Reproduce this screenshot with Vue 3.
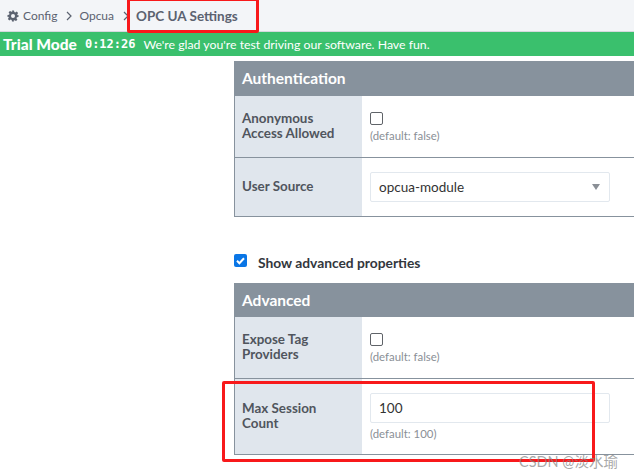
<script setup>
const crumbs = ['Config', 'Opcua']
</script>

<template>
  <div class="page">
    <div class="crumbs">
      <svg class="gear" width="12" height="12" viewBox="0 0 24 24">
        <path fill="#5b6270" fill-rule="evenodd" d="M10 1h4l.7 3.2 1.9.8 2.8-1.8 2.8 2.8-1.8 2.8.8 1.9L23 10v4l-3.2.7-.8 1.9 1.8 2.8-2.8 2.8-2.8-1.8-1.9.8L14 23h-4l-.7-3.2-1.9-.8-2.8 1.8-2.8-2.8 1.8-2.8-.8-1.9L1 14v-4l3.2-.7.8-1.9-1.8-2.8 2.8-2.8 2.8 1.8 1.9-.8zM12 8a4 4 0 1 0 0 8 4 4 0 0 0 0-8z"/>
      </svg>
      <template v-for="c in crumbs" :key="c">
        <span class="crumb">{{ c }}</span>
        <svg class="chev" width="6" height="10" viewBox="0 0 6 10"><path d="M1 1l4 4-4 4" fill="none" stroke="#5b6270" stroke-width="1.2"/></svg>
      </template>
      <span class="current">OPC UA Settings</span>
    </div>

    <div class="trial">
      <b>Trial Mode</b>
      <span class="clock">0:12:26</span>
      <span class="msg">We're glad you're test driving our software. Have fun.</span>
    </div>

    <div class="content">
      <section class="panel">
        <h3>Authentication</h3>
        <div class="row r-anon">
          <div class="label">Anonymous<br>Access Allowed</div>
          <div class="value">
            <span class="box"></span>
            <small>(default: false)</small>
          </div>
        </div>
        <div class="row r-user">
          <div class="label">User Source</div>
          <div class="value">
            <div class="field select">opcua-module<i class="caret"></i></div>
          </div>
        </div>
      </section>

      <label class="advanced">
        <span class="checked">
          <svg width="13" height="13" viewBox="0 0 13 13"><path d="M3 6.8l2.4 2.4L10 4.3" fill="none" stroke="#fff" stroke-width="2"/></svg>
        </span>
        Show advanced properties
      </label>

      <section class="panel">
        <h3 class="short">Advanced</h3>
        <div class="row r-anon">
          <div class="label">Expose Tag<br>Providers</div>
          <div class="value">
            <span class="box"></span>
            <small>(default: false)</small>
          </div>
        </div>
        <div class="row r-max">
          <div class="label">Max Session<br>Count</div>
          <div class="value">
            <div class="field">100</div>
            <small>(default: 100)</small>
          </div>
        </div>
      </section>
    </div>

    <div class="mark mark-title"></div>
    <div class="mark mark-max"></div>
    <div class="watermark">CSDN @淡水瑜</div>
  </div>
</template>

<style>
body { background: #fff; overflow: hidden; }
</style>

<style scoped>
.page {
  position: relative;
  width: 634px;
  height: 476px;
  overflow: hidden;
  font-family: Lato, "Noto Sans CJK SC", sans-serif;
  color: #4a4f58;
}

.crumbs {
  height: 32px;
  box-sizing: border-box;
  background: #f3f5f8;
  border-bottom: 1px solid #d5d9de;
  display: flex;
  align-items: center;
  padding-left: 7px;
  font-size: 12px;
  color: #5b6270;
}
.gear { margin-right: 4px; }
.crumb { margin-right: 9px; }
.chev { margin-right: 7px; }
.current {
  font-weight: 700;
  font-size: 13.5px;
}

.trial {
  height: 24px;
  background: #3ac06d;
  color: #fff;
  display: flex;
  align-items: center;
  padding-left: 3px;
}
.trial b { font-size: 15.5px; font-weight: 900; margin-right: 8px; }
.clock {
  font-family: "DejaVu Sans Mono", monospace;
  font-size: 12px;
  font-weight: 700;
  margin-right: 8px;
}
.msg { font-size: 12.3px; }

.content { padding: 5px 0 0 234px; }

.panel {
  width: 420px;
  border-left: 1px solid #87929d;
  border-bottom: 1px solid #87929d;
  box-sizing: border-box;
}
h3 {
  margin: 0 0 0 -1px;
  height: 35px;
  line-height: 35px;
  padding-left: 8px;
  background: #87929d;
  color: #fff;
  font-size: 15.5px;
}
h3.short { height: 34px; line-height: 34px; }

.row { display: flex; }
.row + .row { border-top: 1px solid #87929d; }
.r-anon { height: 61px; }
.r-user { height: 58px; }
.r-max { height: 75px; }

.label {
  width: 127px;
  flex: none;
  box-sizing: border-box;
  padding-left: 7px;
  padding-bottom: 2px;
  background: #e0e6ed;
  display: flex;
  align-items: center;
  font-size: 13.4px;
  line-height: 15px;
  font-weight: 700;
  color: #50555d;
}
.value {
  padding-left: 8px;
  display: flex;
  flex-direction: column;
  justify-content: center;
  align-items: flex-start;
}
.r-anon .value { padding-top: 2px; }
.box {
  width: 11px;
  height: 11px;
  border: 1px solid #5f6368;
  border-radius: 2px;
  margin-bottom: 4px;
}
small { font-size: 11.4px; color: #8a8f96; line-height: 14px; }

.field {
  width: 240px;
  height: 30px;
  box-sizing: border-box;
  border: 1px solid #e2e8ee;
  border-radius: 2px;
  padding-left: 8px;
  line-height: 28px;
  font-size: 13.5px;
  color: #333;
  position: relative;
}
.r-max small { margin-top: 4px; }
.caret {
  position: absolute;
  right: 9px;
  top: 11px;
  border-left: 4px solid transparent;
  border-right: 4px solid transparent;
  border-top: 6px solid #8a8f96;
}

.advanced {
  display: flex;
  align-items: center;
  height: 66px;
  box-sizing: border-box;
  padding-top: 24px;
  font-size: 13.8px;
  font-weight: 700;
  color: #33373d;
}
.checked {
  width: 13px;
  height: 13px;
  border-radius: 2px;
  background: #0a76e6;
  margin-right: 11px;
  margin-top: -4px;
  display: flex;
}

.mark {
  position: absolute;
  border: 3px solid #f8191b;
  border-radius: 2px;
  box-sizing: border-box;
}
.mark-title { left: 127px; top: -2px; width: 132px; height: 35px; }
.mark-max { left: 222px; top: 381px; width: 373px; height: 81px; }

.watermark {
  position: absolute;
  left: 519px;
  top: 450px;
  font-size: 14.5px;
  color: rgba(130, 130, 130, 0.7);
}
</style>
